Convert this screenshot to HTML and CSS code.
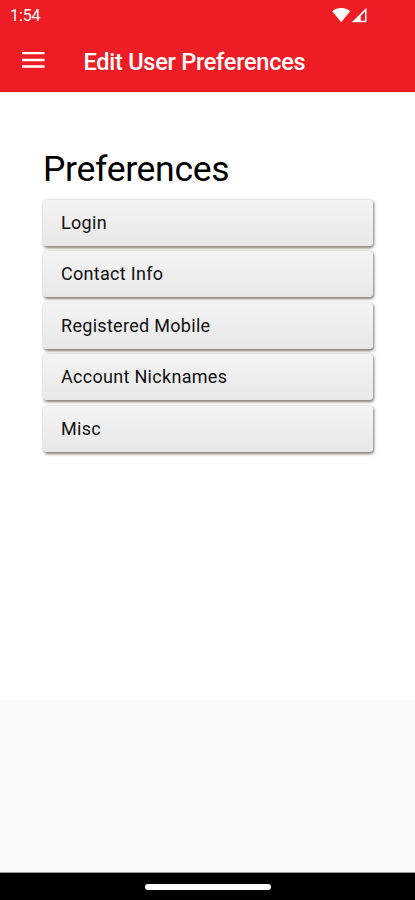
FILE: index.html
```html
<!DOCTYPE html>
<html lang="en">
<head>
<meta charset="utf-8">
<title>Edit User Preferences</title>
<link rel="stylesheet" href="styles.css">
</head>
<body>
<div class="screen">
  <header class="header">
    <div class="status">
      <span class="time">1:54</span>
      <svg class="signals" width="36" height="18" viewBox="0 0 36 18" aria-hidden="true">
        <path d="M.3 5.2C5.2.9 13.2.9 18.1 5.2L9.2 16.2Z" fill="#fff"/>
        <path fill-rule="evenodd" d="M34.5 1.8V16.2H19.7ZM33 5.6L28.7 9.9V14.8H33Z" fill="#fff"/>
      </svg>
    </div>
    <div class="toolbar">
      <svg class="menu" width="23" height="18" viewBox="0 0 23 18" aria-hidden="true">
        <path d="M0 2.2H22.5M0 9H22.5M0 15.5H22.5" stroke="#fff" stroke-width="2.3"/>
      </svg>
      <span class="title">Edit User Preferences</span>
    </div>
  </header>
  <main class="content">
    <h1 class="heading">Preferences</h1>
    <nav class="list">
      <a class="item"><span class="label">Login</span></a>
      <a class="item"><span class="label">Contact Info</span></a>
      <a class="item"><span class="label">Registered Mobile</span></a>
      <a class="item"><span class="label">Account Nicknames</span></a>
      <a class="item"><span class="label">Misc</span></a>
    </nav>
  </main>
  <div class="filler"></div>
  <footer class="navbar"><div class="handle"></div></footer>
</div>
</body>
</html>
```

FILE: styles.css
```css
* { box-sizing: border-box; }
body {
  margin: 0;
  font-family: Roboto, "Liberation Sans", sans-serif;
  color: #111;
}
.screen {
  display: flex;
  flex-direction: column;
  width: 415px;
  height: 900px;
  overflow: hidden;
  background: #fff;
}
.header {
  height: 92px;
  flex: none;
  background: #ee1d25;
  border-bottom: 1px solid #e5161d;
  color: #fff;
}
.status {
  display: flex;
  justify-content: space-between;
  align-items: center;
  height: 30px;
  padding: 0 47px 0 10px;
}
.time {
  padding-top: 1px;
  font-size: 16px;
  line-height: 30px;
  letter-spacing: -0.1px;
}
.signals {
  margin-top: -1px;
}
.toolbar {
  display: flex;
  align-items: center;
  height: 62px;
  padding-left: 21.5px;
}
.menu {
  margin-top: -2px;
}
.title {
  margin-left: 39px;
  padding-top: 1px;
  font-size: 23.5px;
  font-weight: 500;
  line-height: 62px;
  letter-spacing: -0.25px;
  white-space: nowrap;
}
.content {
  flex: none;
  height: 608px;
  padding: 57px 42px 0 43px;
}
.heading {
  margin: 0;
  height: 51px;
  color: #000;
  font-size: 35.5px;
  font-weight: 400;
  line-height: 41px;
  letter-spacing: -0.3px;
}
.list {
  display: flex;
  flex-direction: column;
  gap: 5.4px;
}
.item {
  display: flex;
  align-items: center;
  height: 46px;
  padding-left: 18px;
  border-radius: 4px;
  background: linear-gradient(#f4f4f4, #e8e8e8);
  box-shadow: 0 0 1px #bbb8b5, 1px 1.5px 3px #7c7770;
}
.label {
  font-size: 18px;
  line-height: 24px;
  letter-spacing: 0.3px;
}
.filler {
  flex: 1;
  background: #fafafa;
}
.navbar {
  display: flex;
  justify-content: center;
  flex: none;
  height: 28px;
  padding-top: 11px;
  background: #000;
  border-top: 1px solid #999;
}
.handle {
  width: 126px;
  height: 6px;
  border-radius: 3px;
  background: #fff;
}
```
